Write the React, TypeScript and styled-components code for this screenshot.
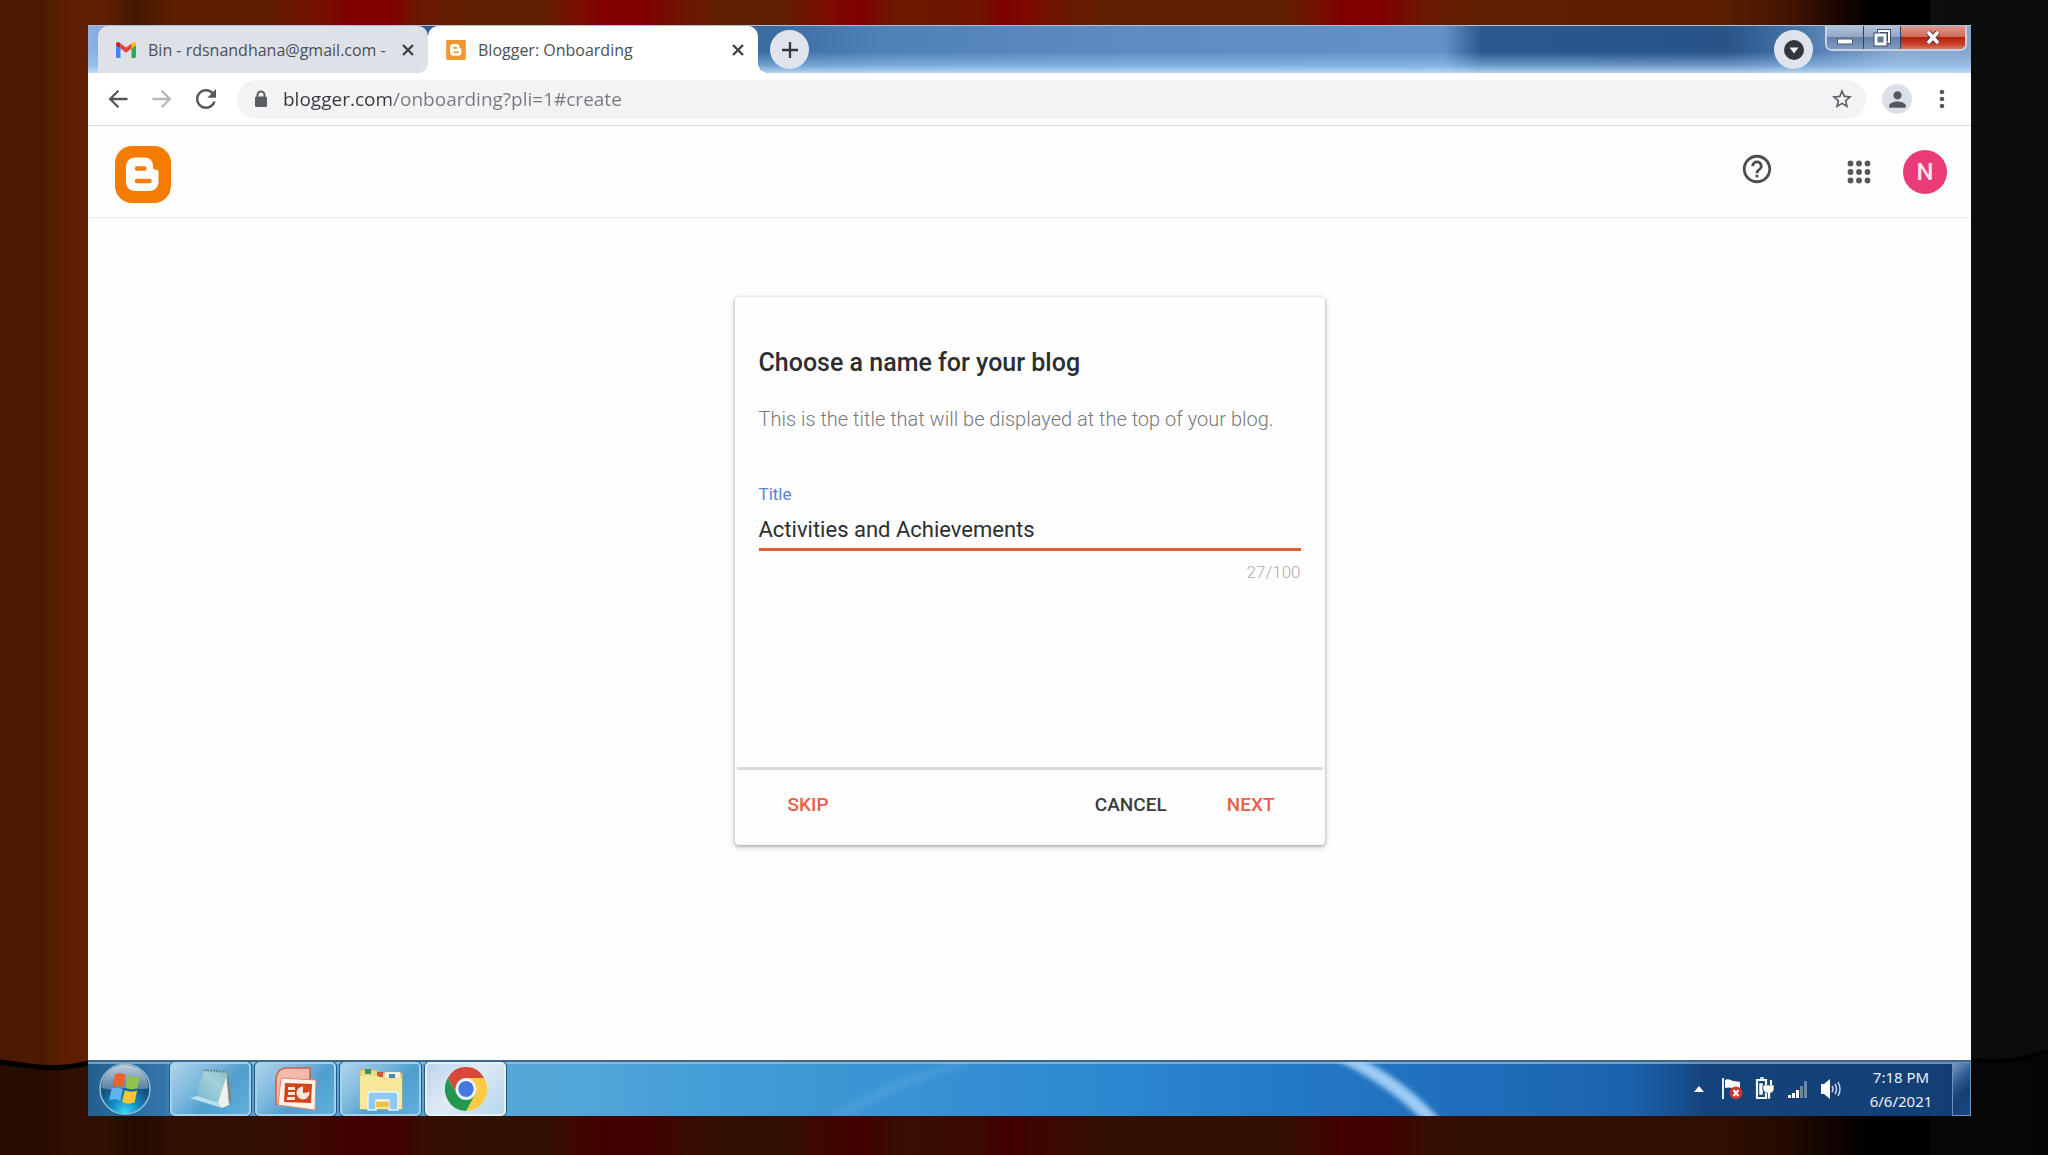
import React, { useState } from "react";
import styled, { createGlobalStyle, css } from "styled-components";

const ui = `"Noto Sans", "Open Sans", sans-serif`;
const chrome = `"Open Sans", "Noto Sans", sans-serif`;
const roboto = `Roboto, "Liberation Sans", sans-serif`;

const Global = createGlobalStyle`
  *, *::before, *::after { box-sizing: border-box; }
  body { margin: 0; background: #000; font-family: ${roboto}; }
  button, input { font-family: inherit; }
`;

const Stage = styled.div`
  position: relative;
  min-height: 100vh;
  display: flex;
  padding: 25px 77px 39px 88px;
  background: linear-gradient(
    90deg,
    #4a1900 0%, #4c1a00 2%, #602000 3.6%, #602000 5%, #451600 6.6%, #5c1e00 8.5%, #601e00 13%,
    #741000 15.5%, #800000 17.2%, #800000 19.2%, #6a1a00 20.6%, #602000 23%, #602000 26.6%,
    #781000 28%, #800000 29.6%, #800000 31.4%, #6c1800 33.6%, #602000 35.4%, #602000 38.2%,
    #7a0c00 40.4%, #800000 42%, #6c1a00 43.8%, #701400 47.8%, #800000 49%, #7c0800 50%,
    #6a1a00 52.5%, #602000 54%, #602000 62.6%, #741000 64.4%, #800000 65.6%, #800000 67.4%,
    #6a1a00 69.6%, #602000 72%, #5c1e00 84%, #421500 87.4%, #160600 90%, #000 91.4%,
    #000 94.2%, #0c0f0d 94.3%, #0b0b0d 100%
  );
`;

const Hem = styled.svg`
  position: absolute;
  left: 0;
  bottom: 0;
  width: 100%;
  height: 105px;
`;

const Desktop = styled.div`
  position: relative;
  flex: 1;
  min-width: 0;
  display: flex;
  flex-direction: column;
  background: #fefefe;
`;

const TabStrip = styled.div`
  height: 48px;
  display: flex;
  align-items: flex-start;
  padding-left: 10px;
  padding-right: 4px;
  border-top: 1px solid #a9bfdc;
  background:
    linear-gradient(180deg, rgba(160, 205, 245, 0) 55%, rgba(160, 205, 245, 0.55) 84%, rgba(190, 225, 250, 0.9) 100%),
    linear-gradient(90deg, #8db1e0 0%, #7ea8dc 2%, #2f5f8f 18%, #3a6ca2 36%, #4f80b8 42%, #5c8cc2 55%,
      #6492c6 72%, #2a598e 74%, #285488 87%, #4a78ac 91%, #8caad0 96%, #86a6cf 100%);
`;

const Tab = styled.div<{ $active?: boolean }>`
  position: relative;
  width: 330px;
  height: 47px;
  display: flex;
  align-items: center;
  gap: 12px;
  padding: 0 10px 0 18px;
  border-radius: 10px 10px 0 0;
  background: ${(p) => (p.$active ? "#fff" : "#dee1e8")};
  font: 16px/20px ${chrome};
  color: #4b4f55;
  ${(p) =>
    p.$active &&
    css`
      &::before,
      &::after {
        content: "";
        position: absolute;
        bottom: 0;
        width: 10px;
        height: 10px;
      }
      &::before {
        left: -10px;
        background: radial-gradient(circle at 0 0, transparent 10px, #fff 10px);
      }
      &::after {
        right: -10px;
        background: radial-gradient(circle at 100% 0, transparent 10px, #fff 10px);
      }
    `}
`;

const TabTitle = styled.span`
  flex: 1;
  min-width: 0;
  overflow: hidden;
  white-space: nowrap;
`;

const PlainButton = styled.button`
  border: 0;
  padding: 0;
  background: none;
  color: inherit;
  display: grid;
  place-items: center;
  flex: none;
  cursor: pointer;
`;

const TabClose = styled(PlainButton)`
  width: 20px;
  height: 20px;
`;

const RoundButton = styled(PlainButton)`
  width: 39px;
  height: 39px;
  margin: 4px 0 0 12px;
  border-radius: 50%;
  background: #dfe4ec;
  color: #33373c;
`;

const Spacer = styled.div`
  flex: 1;
`;

const WindowControls = styled.div`
  display: flex;
  margin-left: 12px;
  border: 2px solid #c3d2e6;
  border-top: 0;
  border-radius: 0 0 7px 7px;
  overflow: hidden;
  background: #33435c;
  gap: 1px;
`;

const WindowButton = styled(PlainButton)<{ $danger?: boolean }>`
  width: ${(p) => (p.$danger ? 64 : 36)}px;
  height: 23px;
  background: ${(p) =>
    p.$danger
      ? "linear-gradient(180deg, #dd9a8c 0%, #cf6c58 46%, #b3200c 50%, #c8442c 80%, #dd7a5c 100%)"
      : "linear-gradient(180deg, #b4c3da 0%, #92a6c4 46%, #6781a6 50%, #7f9ac0 100%)"};
`;

const Toolbar = styled.div`
  height: 53px;
  display: flex;
  align-items: center;
  padding: 0 12px 0 8px;
  background: #fff;
  border-bottom: 1px solid #d8dadf;
`;

const ToolButton = styled(PlainButton)<{ $dim?: boolean }>`
  width: 44px;
  height: 40px;
  color: ${(p) => (p.$dim ? "#b4b6b9" : "#55585c")};
`;

const Omnibox = styled.form`
  flex: 1;
  min-width: 0;
  height: 39px;
  margin-left: 9px;
  display: flex;
  align-items: center;
  gap: 14px;
  padding: 0 12px 0 16px;
  border-radius: 20px;
  background: #f1f3f5;
  color: #5a5d61;
`;

const Address = styled.input`
  flex: 1;
  min-width: 0;
  border: 0;
  padding: 0;
  outline: 0;
  font: 19px/26px ${chrome};
  color: transparent;
  background: linear-gradient(90deg, #34373b 108px, #75787c 108px);
  background-clip: text;
  -webkit-background-clip: text;
`;

const Profile = styled(PlainButton)`
  width: 30px;
  height: 30px;
  margin: 0 10px 0 16px;
  border-radius: 50%;
  background: #dce1e8;
  color: #55595f;
`;

const Menu = styled(PlainButton)`
  width: 40px;
  height: 40px;
  color: #55585c;
  margin-right: -3px;
`;

const Header = styled.header`
  height: 92px;
  display: flex;
  align-items: center;
  padding: 0 24px 0 27px;
  border-bottom: 1px solid #ececee;
  color: #4b4d50;
`;

const Logo = styled.a`
  display: block;
  height: 57px;
  margin-top: 5px;
`;

const HeaderButton = styled(PlainButton)`
  width: 48px;
  height: 48px;
  margin-right: 54px;
  margin-bottom: 5px;
  & + & {
    margin-right: 20px;
    margin-bottom: 0;
  }
`;

const Account = styled(PlainButton)`
  width: 44px;
  height: 44px;
  border-radius: 50%;
  background: #ea3a78;
  color: #fde3ec;
  font: 500 24px/28px ${roboto};
`;

const Main = styled.main`
  flex: 1;
  display: flex;
  justify-content: center;
  align-items: flex-start;
  padding: 79px 16px 32px;
`;

const Card = styled.form`
  width: 590px;
  max-width: 100%;
  border-radius: 4px;
  background: #fefefe;
  box-shadow: 0 1px 3px rgba(60, 50, 80, 0.35), 0 2px 6px rgba(60, 50, 80, 0.25);
`;

const CardBody = styled.div`
  min-height: 470px;
  padding: 49px 24px 24px;
  display: flex;
  flex-direction: column;
`;

const Heading = styled.h1`
  margin: 0;
  font: 500 25px/34px ${roboto};
  color: #2c2e31;
`;

const Hint = styled.p`
  margin: 23px 0 0;
  font: 300 20px/32px ${roboto};
  color: #77797c;
`;

const FieldLabel = styled.label`
  margin-top: 49px;
  font: 17px/20px ${roboto};
  color: #5c82d8;
`;

const TitleInput = styled.input`
  margin-top: 6px;
  width: 100%;
  height: 41px;
  border: 0;
  border-bottom: 3px solid #db5f38;
  border-radius: 0;
  padding: 0;
  outline: 0;
  background: none;
  font: 22px/30px ${roboto};
  color: #2c2e31;
`;

const Counter = styled.output`
  margin-top: 11px;
  align-self: flex-end;
  font: 300 17px/20px ${roboto};
  color: #a9abad;
`;

const Actions = styled.div`
  display: flex;
  align-items: center;
  height: 78px;
  margin: 0 2px;
  padding: 0 32px 5px 35px;
  border-top: 3px solid #dcdade;
`;

const TextButton = styled.button<{ $dark?: boolean }>`
  border: 0;
  background: none;
  height: 40px;
  padding: 0 16px;
  font: 500 19px/24px ${roboto};
  color: ${(p) => (p.$dark ? "#3a3c40" : "#e8604a")};
  cursor: pointer;
  & + & {
    margin-left: 28px;
  }
`;

const Taskbar = styled.footer`
  position: relative;
  height: 56px;
  display: flex;
  align-items: stretch;
  border-top: 2px solid #3d678b;
  overflow: hidden;
  background: linear-gradient(90deg, #22608f 0%, #3474a8 4%, #4f9fcf 5%, #55a8d6 22%, #51a7d9 26%, #439dd6 33%,
    #3a94d4 42%, #2b87cf 55%, #2379c5 64%, #1f6dba 74%, #1c62ad 82%, #14437b 86%, #123e74 100%);
`;

const Sheen = styled.svg`
  position: absolute;
  left: 0;
  top: 0;
  width: 100%;
  height: 100%;
`;

const StartButton = styled(PlainButton)`
  position: relative;
  width: 74px;
  margin-right: 8px;
`;

const TaskButton = styled(PlainButton)<{ $active?: boolean }>`
  position: relative;
  width: 81px;
  height: 54px;
  margin-right: 4px;
  border: 2px solid ${(p) => (p.$active ? "#e3f1fa" : "#a3d2ec")};
  border-radius: 5px;
  box-shadow: 0 0 0 1px #285a80;
  background: ${(p) =>
    p.$active
      ? "linear-gradient(135deg, #bcd3ee 0%, #dfebf6 45%, #b4d6ec 100%)"
      : "linear-gradient(135deg, #aed3ea 0%, #7db9dd 35%, #4f9ecf 60%, #62b0da 100%)"};
`;

const Tray = styled.div`
  position: relative;
  display: flex;
  align-items: center;
  gap: 12px;
  margin-left: auto;
  color: #fff;
`;

const TrayButton = styled(PlainButton)`
  width: 21px;
  height: 40px;
`;

const Clock = styled.time`
  width: 78px;
  margin: 0 0 0 9px;
  text-align: center;
  font: 15px/24px ${ui};
  color: #e8f1fa;
`;

const ShowDesktop = styled(PlainButton)`
  align-self: stretch;
  width: 19px;
  border: 1px solid #6f93ba;
  background: linear-gradient(135deg, #7a9cc4 0%, #2d5a90 35%, #163f74 60%, #1b4a84 100%);
`;

type IconProps = { d: string; size?: number };
const Icon = ({ d, size = 26 }: IconProps) => (
  <svg width={size} height={size} viewBox="0 0 24 24" fill="currentColor" aria-hidden="true">
    <path d={d} />
  </svg>
);

const paths = {
  back: "M21.5 10.8H6.9l6.3-6.3L11.6 3 2.5 12l9.1 9 1.6-1.5-6.3-6.3h14.6z",
  forward: "M2.5 10.8h14.6l-6.3-6.3L12.4 3l9.1 9-9.1 9-1.6-1.5 6.3-6.3H2.5z",
  reload:
    "M17.65 6.35C16.2 4.9 14.21 4 12 4c-4.42 0-7.99 3.58-7.99 8s3.57 8 7.99 8c3.73 0 6.84-2.55 7.73-6h-2.08c-.82 2.33-3.04 4-5.65 4-3.31 0-6-2.69-6-6s2.69-6 6-6c1.66 0 3.14.69 4.22 1.78L13 11h7V4l-2.35 2.35z",
  star: "M22 9.24l-7.19-.62L12 2 9.19 8.63 2 9.24l5.46 4.73L5.82 21 12 17.27 18.18 21l-1.63-7.03L22 9.24zM12 15.4l-3.76 2.27 1-4.28-3.32-2.88 4.38-.38L12 6.1l1.71 4.04 4.38.38-3.32 2.88 1 4.28L12 15.4z",
  person:
    "M12 12c2.21 0 4-1.79 4-4s-1.79-4-4-4-4 1.79-4 4 1.79 4 4 4zm0 2c-2.67 0-8 1.34-8 4v2h16v-2c0-2.66-5.33-4-8-4z",
  help: "M11 18h2v-2h-2v2zm1-16C6.48 2 2 6.48 2 12s4.48 10 10 10 10-4.48 10-10S17.52 2 12 2zm0 18c-4.41 0-8-3.59-8-8s3.59-8 8-8 8 3.59 8 8-3.59 8-8 8zm0-14c-2.21 0-4 1.79-4 4h2c0-1.1.9-2 2-2s2 .9 2 2c0 2-3 1.75-3 5h2c0-2.25 3-2.5 3-5 0-2.21-1.79-4-4-4z",
};

const LockIcon = () => (
  <svg width="16" height="18" viewBox="0 0 16 18" aria-hidden="true">
    <path d="M4.5 8V5a3.5 3.5 0 0 1 7 0v3" fill="none" stroke="#5a5d61" strokeWidth="2" />
    <rect x="2" y="6.5" width="12" height="10.5" rx="1.5" fill="#5a5d61" />
  </svg>
);

const CloseIcon = () => (
  <svg width="12" height="12" viewBox="0 0 12 12" aria-hidden="true">
    <path d="M1 1l10 10M11 1L1 11" stroke="#3d4045" strokeWidth="2.3" />
  </svg>
);

const GmailIcon = () => (
  <svg width="20" height="16" viewBox="0 0 20 16" aria-hidden="true">
    <path d="M0 3v11.500C0 15.400 .6 16 1.400 16H4.500V6.500z" fill="#4285f4" />
    <path d="M20 3v11.500c0 .9-.6 1.500-1.400 1.500H15.500V6.500z" fill="#34a853" />
    <path d="M15.500 1.500v5L20 3.200V2.200C20 .3 17.900-.6 16.400.6z" fill="#fbbc04" />
    <path d="M4.500 6.500v-5L10 5.600l5.500-4.100v5L10 10.700z" fill="#ea4335" />
    <path d="M0 2.200v1l4.500 3.300v-5L3.600.6C2.100-.6 0 .3 0 2.200z" fill="#c5221f" />
  </svg>
);

const bMark =
  "M20 11.500h9.500c5 0 8.500 3.500 8.500 8.200v1.400c0 1.800.9 2.600 2.400 2.600h1c1.500 0 2.100.8 2.100 2.300v9.500c0 5.500-3.700 9.500-9.300 9.500H20.300c-5.600 0-9.300-4-9.300-9.500V21c0-5.500 3.500-9.500 9-9.500z";

const BloggerLogo = () => (
  <svg width="56" height="57" viewBox="0 0 56 57" role="img" aria-label="Blogger">
    <rect width="56" height="57" rx="17" fill="#f57c00" />
    <path d={bMark} fill="#fff" />
    <path d="M22 22.500h7.500M22 35h12.500" stroke="#f57c00" strokeWidth="4.400" strokeLinecap="round" />
  </svg>
);

const BloggerFavicon = () => (
  <svg width="20" height="20" viewBox="0 0 56 57" aria-hidden="true">
    <rect width="56" height="57" rx="4" fill="#f2962e" />
    <path d={bMark} fill="#fff" />
    <path d="M22 22.500h7.500M22 35h12.500" stroke="#f2962e" strokeWidth="4.400" strokeLinecap="round" />
  </svg>
);

const AppsIcon = () => (
  <svg width="24" height="24" viewBox="0 0 24 24" fill="#55575a" aria-hidden="true">
    {[3.5, 12, 20.5].map((y) => [3.5, 12, 20.5].map((x) => <circle key={`${x}-${y}`} cx={x} cy={y} r="2.900" />))}
  </svg>
);

const StartOrb = () => (
  <svg width="52" height="52" viewBox="0 0 52 52" aria-hidden="true">
    <defs>
      <radialGradient id="orb" cx="50%" cy="96%" r="78%">
        <stop offset="0" stopColor="#35d8fb" />
        <stop offset="0.350" stopColor="#168dc4" />
        <stop offset="0.750" stopColor="#11507f" />
        <stop offset="1" stopColor="#2d5a80" />
      </radialGradient>
      <linearGradient id="gloss" x1="0" y1="0" x2="0" y2="1">
        <stop offset="0" stopColor="#dbe6ee" stopOpacity="0.850" />
        <stop offset="1" stopColor="#8aa9c0" stopOpacity="0.550" />
      </linearGradient>
    </defs>
    <circle cx="26" cy="26" r="25" fill="url(#orb)" stroke="#8fbddb" strokeWidth="1.500" />
    <path d="M2.500 25C3 11 13 2 26 2s23 9 23.500 23c-9 3-15-1-23.500 0s-14 3-23.500 0z" fill="url(#gloss)" />
    <path d="M16 11.500c4-2 7.500-1.500 10.500.2L24.300 24c-3.500-1.800-7-2-11-.2z" fill="#ee6428" />
    <path d="M28.500 12.800c4 1.800 8 2 12.500.2l-2.600 12c-4.500 1.800-8.400 1.600-12.100-.2z" fill="#8fc44f" />
    <path d="M12.600 26c4-1.800 7.700-1.500 11.100.2l-2.500 11.500c-3.600-1.800-7-2-11.100-.2z" fill="#62b4f2" />
    <path d="M25.800 27.200c4 1.800 7.900 2 12.300.2l-2.500 11.800c-4.500 1.900-8.500 1.700-12.400-.3z" fill="#fbc62f" />
  </svg>
);

const NotepadIcon = () => (
  <svg width="48" height="44" viewBox="0 0 48 44" aria-hidden="true">
    <defs>
      <linearGradient id="pad" x1="0" y1="1" x2="1" y2="0">
        <stop offset="0" stopColor="#6fb4cc" />
        <stop offset="0.600" stopColor="#a5d2d8" />
        <stop offset="1" stopColor="#86bcc8" />
      </linearGradient>
    </defs>
    <path d="M41 4l4 30-10 7z" fill="#7b8a85" />
    <path d="M39 5l3 33-7 3-10-5z" fill="#eef1ec" />
    <path d="M17 3l24 2-10 31-22-7z" fill="url(#pad)" />
    <path d="M3 31l7-2 22 7 3 5z" fill="#b7e0ee" />
    <path d="M17 3l24 2" stroke="#6a8790" strokeWidth="2" strokeDasharray="2 1" />
  </svg>
);

const PowerPointIcon = () => (
  <svg width="44" height="46" viewBox="0 0 44 46" aria-hidden="true">
    <path d="M12 2h24v12H14l-5 24H2V13C2 7 6 2 12 2z" fill="#f4b9ab" stroke="#c9604a" strokeWidth="1.500" />
    <path d="M7 12l35 2-1 30-37-5z" fill="#fff2ea" stroke="#d98a70" />
    <path d="M11 17l27 1-1 19-27-1z" fill="#cf4517" />
    <path d="M14 21h7v3h-7zM14 26h7v3h-7zM13 31h8v3h-8z" fill="#fbe3d6" />
    <circle cx="29" cy="27" r="6.500" fill="#fbe9df" />
    <path d="M29 27v-6.500a6.500 6.500 0 0 1 6.300 5.500z" fill="#cf4517" />
  </svg>
);

const ExplorerIcon = () => (
  <svg width="46" height="44" viewBox="0 0 46 44" aria-hidden="true">
    <path d="M2 3h16l3 3h23v36H2z" fill="#efdc85" stroke="#cdb35a" />
    <path d="M7 2h6v5H7z" fill="#3f8f58" />
    <path d="M19 5h6v5h-6z" fill="#c65a34" />
    <path d="M27 5h15v6H27z" fill="#f3f1e2" />
    <path d="M31 7h6v4h-6z" fill="#4f87b3" />
    <path d="M2 9h18l4 3h20v30H2z" fill="#f6e896" />
    <path d="M11 25h26c2 0 3 1 3 3v15h-9V33H18v10h-8V28z" fill="#8fc9ef" stroke="#e8f6ff" strokeWidth="1.500" />
    <path d="M18 35h13v5H18z" fill="#f0c248" />
  </svg>
);

const ChromeIcon = () => (
  <svg width="42" height="44" viewBox="0 0 48 48" preserveAspectRatio="none" aria-hidden="true">
    <path d="M3.200 12A24 24 0 0 1 44.800 12H24a12 12 0 0 0-10.400 18z" fill="#d8483a" />
    <path d="M44.800 12A24 24 0 0 1 24 48l10.400-18A12 12 0 0 0 24 12z" fill="#fccb41" />
    <path d="M24 48A24 24 0 0 1 3.200 12l10.400 18a12 12 0 0 0 20.800 0z" fill="#23974f" />
    <circle cx="24" cy="24" r="11" fill="#f4f7fb" />
    <circle cx="24" cy="24" r="8.800" fill="#4579e0" />
  </svg>
);

const FlagIcon = () => (
  <svg width="22" height="24" viewBox="0 0 22 24" aria-hidden="true">
    <path d="M2 1v21" stroke="#fff" strokeWidth="1.800" />
    <path d="M4 3c4-2 6 1 9 1l6 1v6c-5 2-9-2-15 0z" fill="#fff" />
    <circle cx="15" cy="16" r="6.500" fill="#cf3630" />
    <path d="M12.500 13l5 6M17.500 13l-5 6" stroke="#fff" strokeWidth="2" />
  </svg>
);

const PowerIcon = () => (
  <svg width="20" height="24" viewBox="0 0 20 24" aria-hidden="true">
    <path d="M2 3h9v18H2z" fill="none" stroke="#fff" strokeWidth="2.200" />
    <path d="M5 1h4M5 7h2v10H5z" stroke="#fff" strokeWidth="1.500" fill="#fff" />
    <path d="M8 8h11v4c0 2-2 4-3.500 4v6h-3v-6C10 16 8 14 8 12z" fill="#fff" stroke="#3a4a5c" strokeWidth="0.800" />
    <path d="M11 3v5M16 3v5" stroke="#fff" strokeWidth="2" />
  </svg>
);

const SignalIcon = () => (
  <svg width="21" height="20" viewBox="0 0 21 20" aria-hidden="true">
    <path d="M1 16h3v3H1zM5 14h3v5H5zM9 11h3v8H9z" fill="#fff" />
    <path d="M13 7h3v12h-3zM17 2h3v17h-3z" fill="#6c87a4" />
  </svg>
);

const VolumeIcon = () => (
  <svg width="22" height="22" viewBox="0 0 22 22" aria-hidden="true">
    <path d="M1 6h3l6-5v20l-6-5H1z" fill="#fff" />
    <path d="M12 8q2 3 0 6M15 6q3 5 0 10M18 4q4 7 0 14" fill="none" stroke="#c8d8e8" strokeWidth="1.500" />
  </svg>
);

export default function App() {
  const [title, setTitle] = useState("Activities and Achievements");
  const stay = (e: React.FormEvent) => e.preventDefault();

  return (
    <>
      <Global />
      <Stage>
        <Hem viewBox="0 0 2048 105" preserveAspectRatio="none" aria-hidden="true">
          <path d="M0 12C30 16 55 22 88 13C600 80 1400 80 1960 10Q2010 14 2048 0V105H0z" fill="#000" fillOpacity="0.480" />
          <path d="M0 12C30 16 55 22 88 13" fill="none" stroke="#000" strokeWidth="5" />
          <path d="M1971 10Q2020 14 2048 0" fill="none" stroke="#000" strokeWidth="4" />
        </Hem>
        <Desktop>
          <TabStrip>
            <Tab>
              <GmailIcon />
              <TabTitle>Bin - rdsnandhana@gmail.com -</TabTitle>
              <TabClose aria-label="Close Gmail tab"><CloseIcon /></TabClose>
            </Tab>
            <Tab $active>
              <BloggerFavicon />
              <TabTitle>Blogger: Onboarding</TabTitle>
              <TabClose aria-label="Close Blogger tab"><CloseIcon /></TabClose>
            </Tab>
            <RoundButton aria-label="New tab">
              <svg width="18" height="18" viewBox="0 0 18 18" aria-hidden="true">
                <path d="M9 1v16M1 9h16" stroke="currentColor" strokeWidth="2.300" />
              </svg>
            </RoundButton>
            <Spacer />
            <RoundButton aria-label="Search tabs">
              <svg width="20" height="20" viewBox="0 0 20 20" aria-hidden="true">
                <circle cx="10" cy="10" r="10" fill="#33373c" />
                <path d="M5.500 7.500h9L10 13.500z" fill="#eef1f5" />
              </svg>
            </RoundButton>
            <WindowControls>
              <WindowButton aria-label="Minimize">
                <svg width="18" height="22" viewBox="0 0 18 22" aria-hidden="true">
                  <rect x="1.500" y="12" width="15" height="5" fill="#fff" stroke="#4a5a72" />
                </svg>
              </WindowButton>
              <WindowButton aria-label="Restore">
                <svg width="18" height="20" viewBox="0 0 18 20" aria-hidden="true">
                  <path d="M6 5V3h10v11h-2" fill="none" stroke="#3f4f68" strokeWidth="4" />
                  <path d="M6 5V3h10v11h-2" fill="none" stroke="#fff" strokeWidth="2" />
                  <rect x="3" y="7" width="9" height="9" fill="#60789c" stroke="#3f4f68" strokeWidth="5" />
                  <rect x="3" y="7" width="9" height="9" fill="#60789c" stroke="#fff" strokeWidth="3" />
                </svg>
              </WindowButton>
              <WindowButton $danger aria-label="Close window">
                <svg width="18" height="16" viewBox="0 0 18 16" aria-hidden="true">
                  <path d="M4 2l10 11M14 2L4 13" stroke="#5f3030" strokeWidth="5.500" />
                  <path d="M4 2l10 11M14 2L4 13" stroke="#fff" strokeWidth="3.500" />
                </svg>
              </WindowButton>
            </WindowControls>
          </TabStrip>

          <Toolbar>
            <ToolButton aria-label="Back"><Icon d={paths.back} size={24} /></ToolButton>
            <ToolButton $dim aria-label="Forward"><Icon d={paths.forward} size={24} /></ToolButton>
            <ToolButton aria-label="Reload"><Icon d={paths.reload} size={30} /></ToolButton>
            <Omnibox onSubmit={stay}>
              <LockIcon />
              <Address aria-label="Address" spellCheck={false} defaultValue="blogger.com/onboarding?pli=1#create" />
              <PlainButton type="button" aria-label="Bookmark this page"><Icon d={paths.star} size={24} /></PlainButton>
            </Omnibox>
            <Profile aria-label="Profile"><Icon d={paths.person} size={25} /></Profile>
            <Menu aria-label="Menu">
              <svg width="6" height="20" viewBox="0 0 6 20" fill="currentColor" aria-hidden="true">
                <circle cx="3" cy="3" r="2.300" />
                <circle cx="3" cy="10" r="2.300" />
                <circle cx="3" cy="17" r="2.300" />
              </svg>
            </Menu>
          </Toolbar>

          <Header>
            <Logo href="#home"><BloggerLogo /></Logo>
            <Spacer />
            <HeaderButton aria-label="Help"><Icon d={paths.help} size={34} /></HeaderButton>
            <HeaderButton aria-label="Google apps"><AppsIcon /></HeaderButton>
            <Account aria-label="Account N">N</Account>
          </Header>

          <Main>
            <Card onSubmit={stay}>
              <CardBody>
                <Heading>Choose a name for your blog</Heading>
                <Hint>This is the title that will be displayed at the top of your blog.</Hint>
                <FieldLabel htmlFor="blog-title">Title</FieldLabel>
                <TitleInput
                  id="blog-title"
                  maxLength={100}
                  spellCheck={false}
                  value={title}
                  onChange={(e) => setTitle(e.target.value)}
                />
                <Counter htmlFor="blog-title">{title.length}/100</Counter>
              </CardBody>
              <Actions>
                <TextButton type="button">SKIP</TextButton>
                <Spacer />
                <TextButton type="button" $dark>CANCEL</TextButton>
                <TextButton type="submit">NEXT</TextButton>
              </Actions>
            </Card>
          </Main>

          <Taskbar>
            <Sheen viewBox="0 0 1883 54" preserveAspectRatio="none" aria-hidden="true">
              <defs>
                <filter id="soft"><feGaussianBlur stdDeviation="2.500" /></filter>
              </defs>
              <path d="M1244 -4Q1300 22 1336 60h18Q1322 22 1272 -4z" fill="#9ccbf5" filter="url(#soft)" />
              <path d="M740 54Q790 20 860 0h30Q820 22 760 54z" fill="#7cc0ea" fillOpacity="0.200" filter="url(#soft)" />
              <path d="M0 1h1883" stroke="#a9cbe6" strokeOpacity="0.600" strokeWidth="2" />
            </Sheen>
            <StartButton aria-label="Start"><StartOrb /></StartButton>
            <TaskButton aria-label="Notepad"><NotepadIcon /></TaskButton>
            <TaskButton aria-label="PowerPoint"><PowerPointIcon /></TaskButton>
            <TaskButton aria-label="File Explorer"><ExplorerIcon /></TaskButton>
            <TaskButton $active aria-label="Chrome"><ChromeIcon /></TaskButton>
            <Tray>
              <TrayButton aria-label="Show hidden icons">
                <svg width="12" height="8" viewBox="0 0 12 8" aria-hidden="true">
                  <path d="M6 1l5 6H1z" fill="#fff" />
                </svg>
              </TrayButton>
              <TrayButton aria-label="Action Center"><FlagIcon /></TrayButton>
              <TrayButton aria-label="Power"><PowerIcon /></TrayButton>
              <TrayButton aria-label="Network"><SignalIcon /></TrayButton>
              <TrayButton aria-label="Volume"><VolumeIcon /></TrayButton>
              <Clock dateTime="2021-06-06T19:18">
                7:18 PM
                <br />
                6/6/2021
              </Clock>
              <ShowDesktop aria-label="Show desktop" />
            </Tray>
          </Taskbar>
        </Desktop>
      </Stage>
    </>
  );
}
